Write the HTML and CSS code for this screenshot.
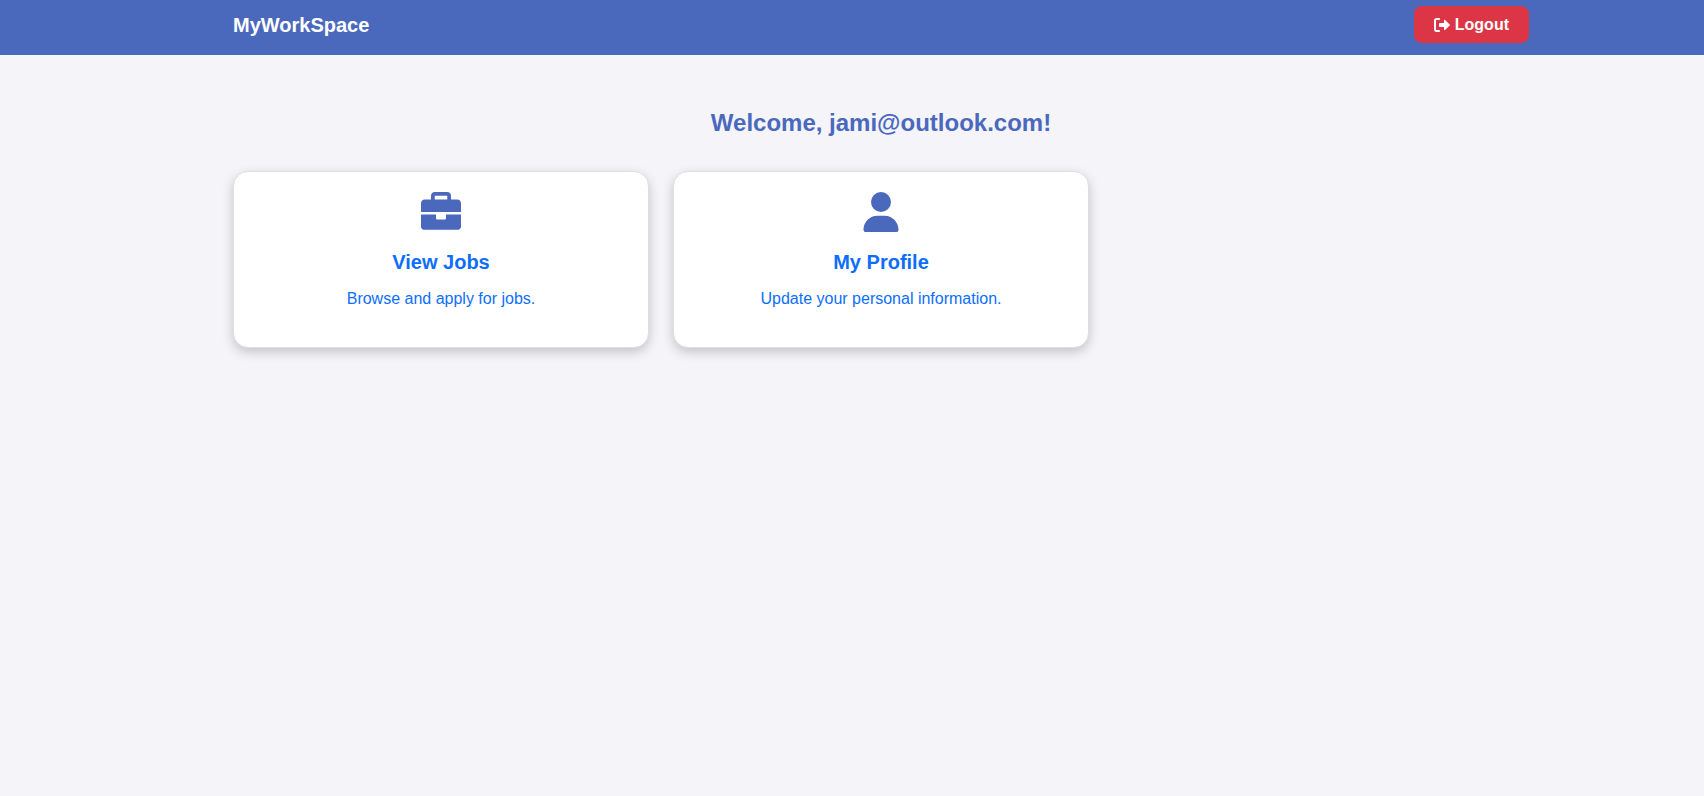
FILE: index.html
```html
<!DOCTYPE html>
<html lang="en">
<head>
<meta charset="utf-8">
<meta name="viewport" content="width=device-width, initial-scale=1">
<title>MyWorkSpace</title>
<link rel="stylesheet" href="styles.css">
</head>
<body>
<header class="navbar">
  <div class="container navbar-inner">
    <a class="brand" href="#">MyWorkSpace</a>
    <button class="logout" type="button">
      <svg class="logout-icon" viewBox="0 0 512 512" aria-hidden="true"><path d="M352 96L502 238c12 10 12 26 0 36L352 416c-12 10-32 4-32-14V320H184c-14 0-24-10-24-24V216c0-14 10-24 24-24H320V110c0-18 20-24 32-14zM192 56V72c0 14-10 24-24 24H96c-18 0-32 14-32 32V384c0 18 14 32 32 32h72c14 0 24 10 24 24v16c0 14-10 24-24 24H80c-44 0-80-36-80-80V112C0 68 36 32 80 32h88c14 0 24 10 24 24z"/></svg>
      Logout
    </button>
  </div>
</header>
<main class="container main">
  <h1 class="welcome">Welcome, jami@outlook.com!</h1>
  <div class="cards">
    <a class="card" href="#">
      <svg class="card-icon" viewBox="0 0 512 512" aria-hidden="true"><path d="M176 48H336V96H176zM128 48V96H48C21.500 96 0 117.500 0 144v112H512V144c0-26.500-21.500-48-48-48H384V48c0-26.500-21.500-48-48-48H176c-26.500 0-48 21.500-48 48zM512 288H320v48c0 8.800-7.200 16-16 16H208c-8.800 0-16-7.200-16-16V288H0V440c0 26.500 21.500 44 48 44H464c26.500 0 48-17.500 48-44V288z" fill-rule="evenodd"/></svg>
      <h2 class="card-title">View Jobs</h2>
      <p class="card-text">Browse and apply for jobs.</p>
    </a>
    <a class="card" href="#">
      <svg class="card-icon" viewBox="-32 0 512 512" aria-hidden="true"><path d="M224 256A128 128 0 1 0 224 0a128 128 0 1 0 0 256zm-45.700 48C79.800 304 0 383.800 0 482.300C0 498.700 13.300 512 29.700 512H418.300c16.400 0 29.700-13.300 29.700-29.700C448 383.800 368.200 304 269.700 304H178.300z"/></svg>
      <h2 class="card-title">My Profile</h2>
      <p class="card-text">Update your personal information.</p>
    </a>
  </div>
</main>
</body>
</html>
```
FILE: styles.css
```css
* {
  box-sizing: border-box;
}

body {
  margin: 0;
  background: #f4f4f9;
  color: #212529;
  font-family: "Liberation Sans", Arial, sans-serif;
  font-size: 16px;
  line-height: 24px;
}

.navbar,
.main {
  padding-left: 58px;
}

.navbar {
  padding-top: 6px;
  padding-bottom: 12px;
  background: #4a69bd;
}

.container {
  max-width: 1320px;
  margin: 0 auto;
  padding-right: 12px;
  padding-left: 12px;
}

.navbar-inner {
  display: flex;
  align-items: center;
  justify-content: space-between;
}

.brand {
  color: #fff;
  font-size: 20px;
  font-weight: 700;
  text-decoration: none;
}

.logout {
  display: flex;
  align-items: center;
  gap: 5px;
  padding: 8px 20px;
  border: 0;
  border-radius: 8px;
  background: #dc3545;
  color: #fff;
  font: inherit;
  font-weight: 700;
  line-height: 21px;
  cursor: pointer;
}

.logout-icon {
  width: 16px;
  height: 16px;
  fill: currentColor;
}

.main {
  max-width: 1378px;
  padding: 50px 12px 24px 70px;
}

.welcome {
  margin: 0 0 30px;
  color: #4a69bd;
  font-size: 24px;
  font-weight: 700;
  line-height: 36px;
  text-align: center;
}

.cards {
  display: grid;
  grid-template-columns: repeat(3, 1fr);
  gap: 24px;
}

.card {
  display: flex;
  flex-direction: column;
  align-items: center;
  padding: 20px 20px 36px;
  border: 1px solid #dfdfe0;
  border-radius: 15px;
  background: #fff;
  box-shadow: 0 4px 12px rgba(0, 0, 0, 0.2);
  color: #0d6efd;
  text-align: center;
  text-decoration: none;
}

.card-icon {
  width: 40px;
  height: 40px;
  fill: #4a69bd;
}

.card-title {
  margin: 18px 0 13px;
  font-size: 20px;
  font-weight: 700;
  line-height: 24px;
}

.card-text {
  margin: 0;
}
```
